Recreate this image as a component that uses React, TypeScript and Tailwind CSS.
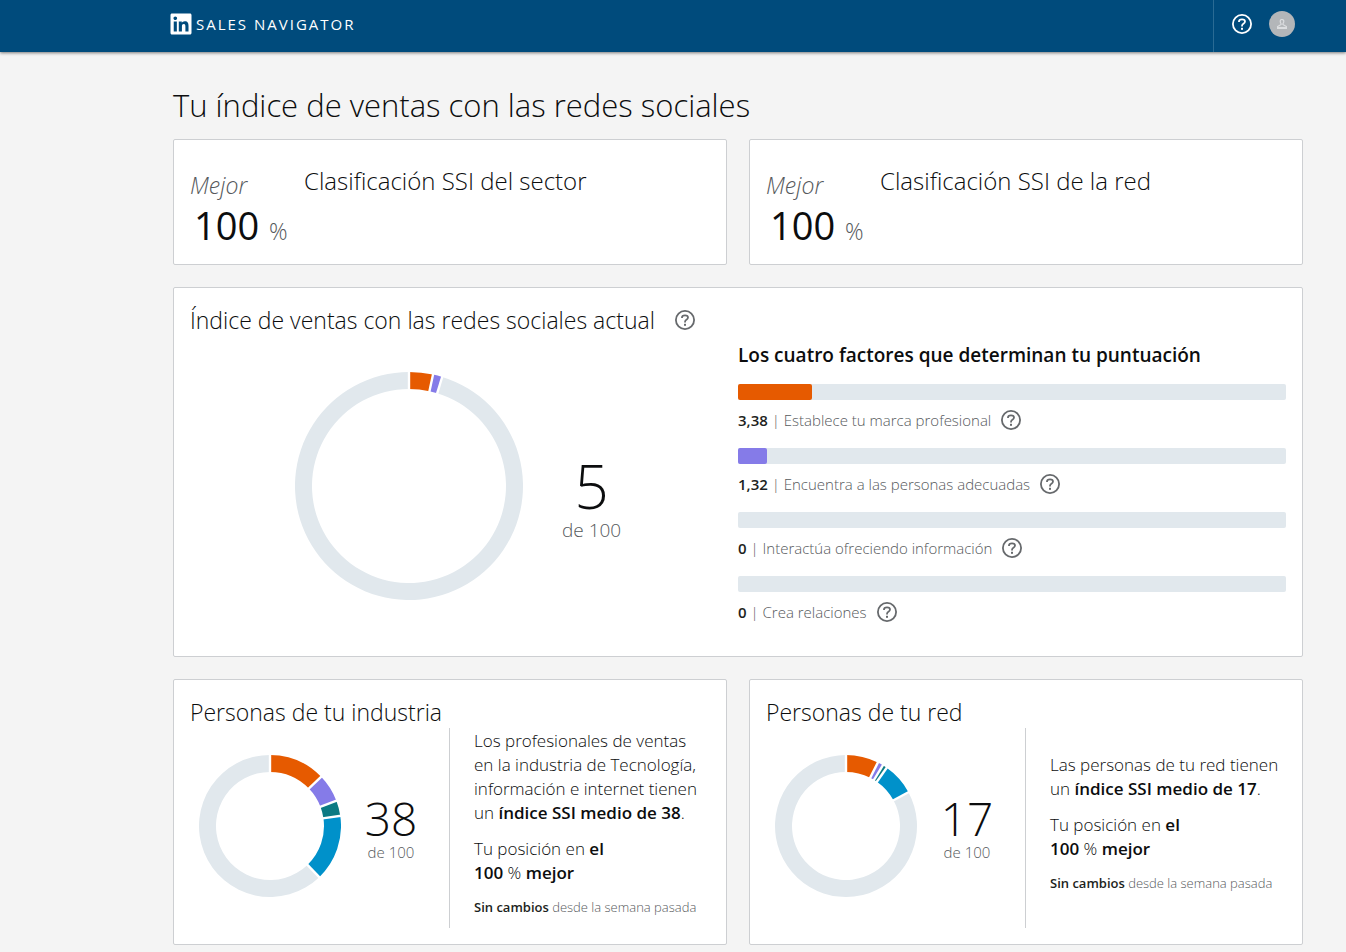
import { FaLinkedin } from "react-icons/fa";
import type { ReactNode } from "react";

const ORANGE = "#e65a00";
const PURPLE = "#857be8";
const TEAL = "#0b7a83";
const BLUE = "#0091ca";
const TRACK = "#e1e8ed";

type Slice = { value: number; color: string };

const factors = [
  { score: "3,38", value: 3.38, label: "Establece tu marca profesional", bar: "bg-[#e65a00]" },
  { score: "1,32", value: 1.32, label: "Encuentra a las personas adecuadas", bar: "bg-[#857be8]" },
  { score: "0", value: 0, label: "Interactúa ofreciendo información", bar: "bg-[#0b7a83]" },
  { score: "0", value: 0, label: "Crea relaciones", bar: "bg-[#0091ca]" },
];

function HelpButton({ label, className }: { label: string; className: string }) {
  return (
    <button type="button" aria-label={label} className={className}>
      <svg width="20" height="20" viewBox="0 0 20 20" fill="none" stroke="currentColor">
        <circle cx="10" cy="10" r="9.1" strokeWidth="1.8" />
        <path
          d="M7 8.1V7.6C7 6.1 8.2 5.3 10 5.3s3 .8 3 2.3c0 1.7-1.6 1.9-2.4 2.7-.5.5-.6 1-.6 2.2"
          strokeWidth="1.8"
        />
        <rect x="9" y="13.8" width="2" height="2" fill="currentColor" stroke="none" />
      </svg>
    </button>
  );
}

function Donut({ size, slices }: { size: number; slices: Slice[] }) {
  const thickness = 17;
  const c = size / 2;
  const inner = c - thickness;
  const used = slices.reduce((sum, s) => sum + s.value, 0);
  const all = [...slices, { value: 100 - used, color: TRACK }];

  const point = (r: number, pct: number) => {
    const a = (pct / 100) * Math.PI * 2;
    return `${c + r * Math.sin(a)} ${c - r * Math.cos(a)}`;
  };

  let start = 0;
  const arcs = all.map((s) => {
    const end = start + s.value;
    const large = s.value > 50 ? 1 : 0;
    const d = `M${point(c, start)} A${c} ${c} 0 ${large} 1 ${point(c, end)} L${point(inner, end)} A${inner} ${inner} 0 ${large} 0 ${point(inner, start)} Z`;
    const edge = `M${point(c + 1, start)} L${point(inner - 1, start)}`;
    start = end;
    return { d, edge, color: s.color };
  });

  return (
    <svg width={size} height={size} viewBox={`0 0 ${size} ${size}`} className="shrink-0" aria-hidden="true">
      {arcs.map((a, i) => (
        <path key={i} d={a.d} fill={a.color} />
      ))}
      {arcs.map((a, i) => (
        <path key={i} d={a.edge} stroke="#fff" strokeWidth="2.4" />
      ))}
    </svg>
  );
}

function Card({ className = "", children }: { className?: string; children: ReactNode }) {
  return (
    <section className={`rounded-xs border border-[#cdcfd2] bg-white px-4 ${className}`}>{children}</section>
  );
}

function RankCard({ title }: { title: string }) {
  return (
    <Card className="flex h-[126px] pt-[23px]">
      <div className="w-[114px] shrink-0">
        <p className="pt-1 text-[23px] leading-9 text-[#56595c] italic">Mejor</p>
        <p className="pl-1 text-[38px] leading-11 font-normal whitespace-nowrap">
          100 <span className="text-[23px] font-light text-[#56595c]">%</span>
        </p>
      </div>
      <h2 className="text-2xl leading-9">{title}</h2>
    </Card>
  );
}

type PeopleCardProps = {
  title: string;
  score: number;
  slices: Slice[];
  children: ReactNode;
};

function PeopleCard({ title, score, slices, children }: PeopleCardProps) {
  return (
    <Card className="h-[266px] pt-4">
      <h2 className="text-[23px] leading-8">{title}</h2>
      <div className="flex h-[200px]">
        <div className="flex w-[260px] shrink-0 items-center border-r border-[#cdcfd2] pb-1 pl-[9px]">
          <Donut size={142} slices={slices} />
          <div className="flex-1 pt-1 pr-2 text-center">
            <p className="text-[46px] leading-12">{score}</p>
            <p className="text-[15px] leading-5 text-[#56595c]">de 100</p>
          </div>
        </div>
        <div className="flex flex-1 flex-col justify-center gap-3 pb-[10px] pl-6 text-[17px] leading-6 whitespace-nowrap">
          {children}
          <p>
            Tu posición en <strong className="font-semibold">el</strong>
            <br />
            <strong className="font-semibold">100</strong> % <strong className="font-semibold">mejor</strong>
          </p>
          <p className="text-[13px] leading-5 text-[#56595c]">
            <strong className="font-semibold text-[#1d1f21]">Sin cambios</strong> desde la semana pasada
          </p>
        </div>
      </div>
    </Card>
  );
}

export default function App() {
  return (
    <div className="min-h-screen bg-[#f4f4f4] font-['Open_Sans','Noto_Sans',sans-serif] font-light text-[#0c0d0e]">
      <header className="flex h-[52px] items-center justify-between bg-[#004b7c] pr-[51px] pl-[169px] text-white shadow-[0_1px_3px_rgba(0,0,0,0.5)]">
        <a href="#" className="flex items-center gap-[3px] pb-1">
          <FaLinkedin size={24} />
          <span className="text-[15px] font-normal tracking-[2px]">SALES NAVIGATOR</span>
        </a>
        <div className="flex h-full items-center gap-[17px] border-l border-[#2a6b94] pb-1 pl-[18px]">
          <HelpButton label="Ayuda" className="text-white" />
          <button
            type="button"
            aria-label="Tu perfil"
            className="flex size-[26px] items-center justify-center rounded-full bg-[#b3b6b9] text-[#dcdee0]"
          >
            <svg width="10" height="10" viewBox="0 0 10 10" fill="none" stroke="currentColor" strokeWidth="1.2">
              <path d="M3.2 2.3a1.8 1.8 0 0 1 3.6 0c0 1.2-.6 2-.9 2.6v.6L9.4 7.6v1.8H.6V7.6l3.5-2.1v-.6c-.3-.6-.9-1.4-.9-2.6Z" />
              <path d="M1 8.5h8" />
            </svg>
          </button>
        </div>
      </header>

      <main className="pt-[31px] pr-[43px] pb-[7px] pl-[173px]">
        <h1 className="text-[31px] leading-11">Tu índice de ventas con las redes sociales</h1>

        <div className="mt-3 grid grid-cols-2 gap-[22px]">
          <RankCard title="Clasificación SSI del sector" />
          <RankCard title="Clasificación SSI de la red" />

          <Card className="col-span-2 h-[370px] pt-4">
            <div className="flex items-center gap-5">
              <h2 className="text-[23px] leading-8">Índice de ventas con las redes sociales actual</h2>
              <HelpButton label="Más información sobre el índice" className="text-[#66696c]" />
            </div>
            <div className="grid grid-cols-2">
              <div className="flex items-center gap-[39px] pt-1 pl-[105px]">
                <Donut
                  size={228}
                  slices={[
                    { value: 3.38, color: ORANGE },
                    { value: 1.32, color: PURPLE },
                  ]}
                />
                <div className="pt-6 text-center">
                  <p className="text-[60px] leading-16">5</p>
                  <p className="text-[19px] leading-6 text-[#56595c]">de 100</p>
                </div>
              </div>
              <div className="pt-[3px]">
                <h3 className="text-[19px] leading-8 font-semibold">
                  Los cuatro factores que determinan tu puntuación
                </h3>
                <ul className="mt-[13px] flex flex-col gap-2">
                  {factors.map((f) => (
                    <li key={f.label}>
                      <div className="h-4 rounded-xs bg-[#e1e8ed]">
                        <div
                          className={`h-full rounded-xs ${f.bar}`}
                          style={{ width: `${(f.value / 25) * 100}%` }}
                        />
                      </div>
                      <div className="flex h-10 items-center gap-[10px] text-[15px] leading-6 text-[#56595c]">
                        <p>
                          <strong className="font-semibold text-[#1d1f21]">{f.score}</strong> | {f.label}
                        </p>
                        <HelpButton label={`Más información: ${f.label}`} className="text-[#66696c]" />
                      </div>
                    </li>
                  ))}
                </ul>
              </div>
            </div>
          </Card>

          <PeopleCard
            title="Personas de tu industria"
            score={38}
            slices={[
              { value: 12.8, color: ORANGE },
              { value: 6.4, color: PURPLE },
              { value: 3.5, color: TEAL },
              { value: 15.1, color: BLUE },
            ]}
          >
            <p>
              Los profesionales de ventas
              <br />
              en la industria de Tecnología,
              <br />
              información e internet tienen
              <br />
              un <strong className="font-semibold">índice SSI medio de 38</strong>.
            </p>
          </PeopleCard>
          <PeopleCard
            title="Personas de tu red"
            score={17}
            slices={[
              { value: 7.4, color: ORANGE },
              { value: 1.3, color: PURPLE },
              { value: 1, color: TEAL },
              { value: 7.4, color: BLUE },
            ]}
          >
            <p>
              Las personas de tu red tienen
              <br />
              un <strong className="font-semibold">índice SSI medio de 17</strong>.
            </p>
          </PeopleCard>
        </div>
      </main>
    </div>
  );
}
